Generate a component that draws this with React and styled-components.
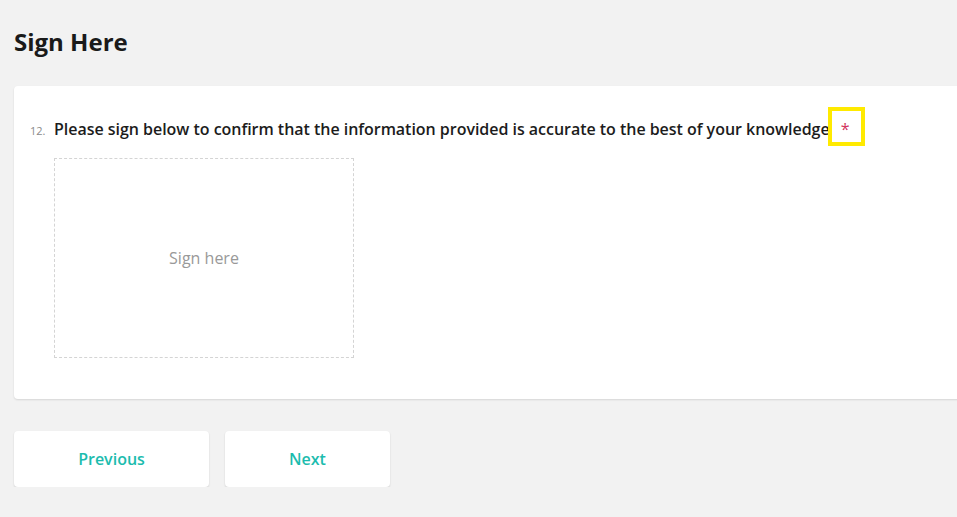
import React from "react";
import styled, { createGlobalStyle } from "styled-components";

const GlobalStyle = createGlobalStyle`
  html, body {
    margin: 0;
    padding: 0;
    background: #f2f2f2;
    overflow: hidden;
  }
  body {
    font-family: "Open Sans", "Liberation Sans", sans-serif;
    color: #1c1c1c;
  }
`;

const Page = styled.main`
  padding: 26px 0 0 14px;
  width: 1000px;
`;

const Title = styled.h1`
  margin: 0 0 28px;
  font-size: 24px;
  font-weight: 700;
  line-height: 32px;
  color: #1a1a1a;
`;

const Card = styled.section`
  background: #fff;
  border-radius: 4px;
  box-shadow: 0 1px 2px rgba(0, 0, 0, 0.12);
  padding: 32px 16px 41px 16px;
  width: 986px;
  box-sizing: border-box;
`;

const QuestionRow = styled.div`
  display: flex;
  align-items: baseline;
  gap: 8px;
`;

const Number = styled.span`
  font-size: 11px;
  color: #8a8a8a;
  width: 16px;
`;

const QuestionText = styled.span`
  font-size: 16px;
  font-weight: 600;
  line-height: 22px;
  letter-spacing: -0.03px;
  color: #1c1c1c;
`;

/* required marker, with the yellow highlight frame laid over it */
const Required = styled.span`
  position: relative;
  margin-left: 11px;
  color: #d2345e;
  font-weight: 400;

  &::after {
    content: "";
    position: absolute;
    left: -13px;
    top: -11px;
    width: 37px;
    height: 39px;
    box-sizing: border-box;
    border: 4px solid #ffea00;
  }
`;

const SignBox = styled.div`
  margin: 18px 0 0 24px;
  width: 300px;
  height: 200px;
  box-sizing: border-box;
  border: 1px dashed #d4d4d4;
  display: flex;
  align-items: center;
  justify-content: center;
  font-size: 16px;
  color: #999;
`;

const Actions = styled.nav`
  display: flex;
  gap: 16px;
  margin-top: 32px;
`;

const NavButton = styled.button`
  width: ${({ $width }) => $width}px;
  height: 56px;
  border: none;
  border-radius: 4px;
  background: #fff;
  box-shadow: 0 1px 2px rgba(0, 0, 0, 0.14);
  font-family: inherit;
  font-size: 16px;
  font-weight: 600;
  color: #1cbcae;
  cursor: pointer;
`;

const App = () => {
  return (
    <>
      <GlobalStyle />
      <Page>
        <Title>Sign Here</Title>
        <Card>
          <QuestionRow>
            <Number>12.</Number>
            <QuestionText>
              Please sign below to confirm that the information provided is
              accurate to the best of your knowledge
              <Required>*</Required>
            </QuestionText>
          </QuestionRow>
          <SignBox>Sign here</SignBox>
        </Card>
        <Actions>
          <NavButton $width={195}>Previous</NavButton>
          <NavButton $width={165}>Next</NavButton>
        </Actions>
      </Page>
    </>
  );
};

export default App;
